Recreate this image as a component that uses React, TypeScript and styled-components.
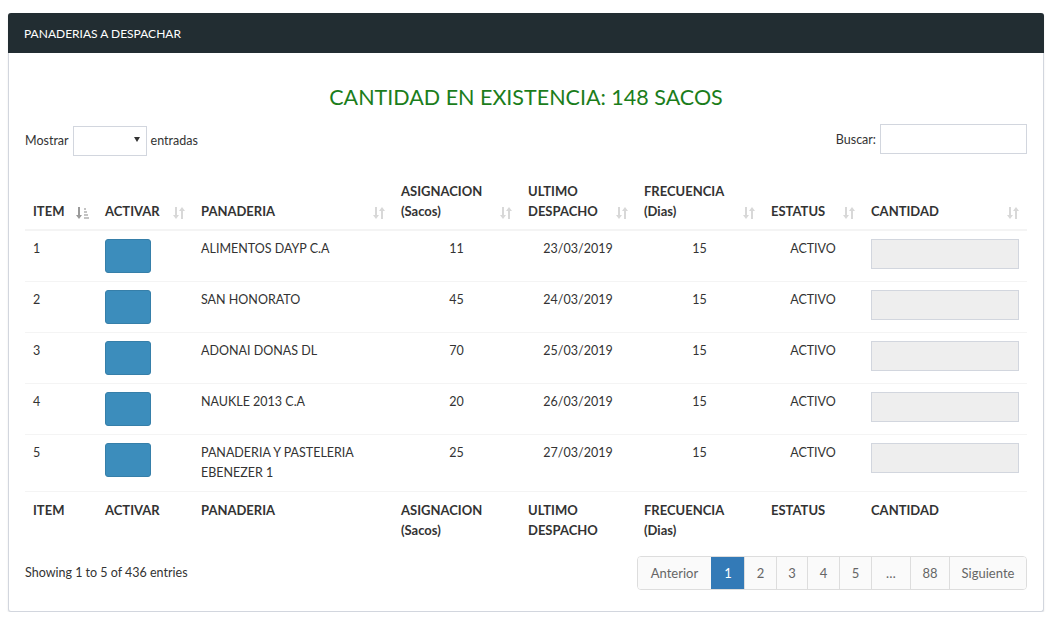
import React from 'react';
import styled, { createGlobalStyle } from 'styled-components';

const GlobalStyle = createGlobalStyle`
  body {
    margin: 0;
    background: #ffffff;
    font-family: Lato, "Open Sans", sans-serif;
    font-size: 13px;
    color: #333;
  }
`;

const Page = styled.div`
  padding: 13px 11px 0 8px;
`;

const Card = styled.div`
  border: 1px solid #d2d6de;
  border-top: none;
  border-radius: 3px;
  box-shadow: 0 1px 2px rgba(0, 0, 0, 0.1);
  background: #fff;
`;

const CardHeader = styled.div`
  background: #222d32;
  color: #fff;
  height: 40px;
  display: flex;
  align-items: center;
  padding: 0 16px;
  font-size: 12px;
  border-radius: 3px 3px 0 0;
  margin: 0 -1px;
`;

const CardBody = styled.div`
  padding: 30px 16px 21px;
`;

const Title = styled.h2`
  margin: 0 0 12px;
  text-align: center;
  color: #1b7d1b;
  font-weight: 400;
  font-size: 21.5px;
  line-height: 28px;
`;

const Controls = styled.div`
  display: flex;
  justify-content: space-between;
  align-items: flex-start;
  margin-bottom: 17px;
  padding-top: 1px;
`;

const Label = styled.label`
  display: flex;
  align-items: center;
  gap: 4px;
  font-size: 12.5px;
  color: #333;
`;

const LengthSelect = styled.div`
  position: relative;
  width: 74px;
  height: 30px;
  border: 1px solid #d2d6de;
  box-sizing: border-box;
  margin-top: 2px;
  &::after {
    content: '';
    position: absolute;
    right: 6px;
    top: 10px;
    border-left: 3px solid transparent;
    border-right: 3px solid transparent;
    border-top: 5px solid #333;
  }
`;

const SearchInput = styled.div`
  width: 147px;
  height: 30px;
  border: 1px solid #d2d6de;
  box-sizing: border-box;
`;

const Table = styled.table`
  width: 100%;
  border-collapse: collapse;
  table-layout: fixed;
  line-height: 20px;
`;

const Th = styled.th<{ $w: number }>`
  box-sizing: border-box;
  width: ${p => p.$w}px;
  text-align: left;
  vertical-align: bottom;
  font-weight: 700;
  font-size: 13px;
  color: #333;
  padding: 8px 8px 8px;
  position: relative;
  border-bottom: 2px solid #f4f4f4;
`;

const FootTh = styled.th`
  text-align: left;
  vertical-align: top;
  font-weight: 700;
  font-size: 13px;
  color: #333;
  padding: 8px 8px 8px;
  border-top: 1px solid #f4f4f4;
`;

const SortIcon = styled.span`
  position: absolute;
  right: 7px;
  bottom: 9px;
  display: flex;
`;

const Td = styled.td<{ $center?: boolean }>`
  padding: 8px;
  vertical-align: top;
  font-size: 12.5px;
  color: #333;
  text-align: ${p => (p.$center ? 'center' : 'left')};
  border-top: 1px solid #f4f4f4;
`;

const ActivateButton = styled.button`
  display: block;
  width: 46px;
  height: 34px;
  background: #3c8dbc;
  border: 1px solid #367fa9;
  border-radius: 3px;
  padding: 0;
`;

const QtyInput = styled.div`
  width: 148px;
  height: 30px;
  background: #eeeeee;
  border: 1px solid #d2d6de;
  box-sizing: border-box;
`;

const Footer = styled.div`
  display: flex;
  justify-content: space-between;
  align-items: center;
  margin-top: 8px;
`;

const Info = styled.div`
  font-size: 12.5px;
  color: #333;
  margin-top: -2px;
`;

const Pager = styled.div`
  display: flex;
  border: 1px solid #ddd;
  border-radius: 4px;
  overflow: hidden;
`;

const PageItem = styled.span<{ $w: number; $active?: boolean }>`
  width: ${p => p.$w}px;
  height: 32px;
  display: flex;
  align-items: center;
  justify-content: center;
  font-size: 13px;
  background: ${p => (p.$active ? '#337ab7' : '#fafafa')};
  color: ${p => (p.$active ? '#fff' : '#666')};
  border-left: 1px solid ${p => (p.$active ? '#337ab7' : '#ddd')};
  box-sizing: border-box;
  &:first-child {
    border-left: none;
  }
`;

const SortBoth = () => (
  <svg width="14" height="14" viewBox="0 0 14 14">
    <g fill="#d8d8d8">
      <rect x="3" y="1" width="2" height="9" />
      <polygon points="1,9 7,9 4,13" />
      <rect x="9" y="4" width="2" height="9" />
      <polygon points="7,5 13,5 10,1" />
    </g>
  </svg>
);

const SortAsc = () => (
  <svg width="14" height="14" viewBox="0 0 14 14">
    <g fill="#9a9a9a">
      <rect x="2" y="1" width="2" height="9" />
      <polygon points="0,9 6,9 3,13" />
    </g>
    <g fill="#c4c4c4">
      <rect x="8" y="2" width="2" height="2" />
      <rect x="8" y="5" width="3" height="2" />
      <rect x="8" y="8" width="4" height="2" />
      <rect x="8" y="11" width="5" height="2" />
    </g>
  </svg>
);

const columns: { w: number; label: React.ReactNode; asc?: boolean }[] = [
  { w: 72, label: 'ITEM', asc: true },
  { w: 96, label: 'ACTIVAR' },
  { w: 200, label: 'PANADERIA' },
  { w: 127, label: <>ASIGNACION<br />(Sacos)</> },
  { w: 116, label: <>ULTIMO<br />DESPACHO</> },
  { w: 127, label: <>FRECUENCIA<br />(Dias)</> },
  { w: 100, label: 'ESTATUS' },
  { w: 164, label: 'CANTIDAD' },
];

const rows = [
  { item: 1, name: 'ALIMENTOS DAYP C.A', sacos: 11, date: '23/03/2019' },
  { item: 2, name: 'SAN HONORATO', sacos: 45, date: '24/03/2019' },
  { item: 3, name: 'ADONAI DONAS DL', sacos: 70, date: '25/03/2019' },
  { item: 4, name: 'NAUKLE 2013 C.A', sacos: 20, date: '26/03/2019' },
  { item: 5, name: <>PANADERIA Y PASTELERIA<br />EBENEZER 1</>, sacos: 25, date: '27/03/2019' },
];

const pages = [
  { label: 'Anterior', w: 73 },
  { label: '1', w: 33, active: true },
  { label: '2', w: 32 },
  { label: '3', w: 31 },
  { label: '4', w: 32 },
  { label: '5', w: 32 },
  { label: '…', w: 39 },
  { label: '88', w: 39 },
  { label: 'Siguiente', w: 77 },
];

export default function App() {
  return (
    <Page>
      <GlobalStyle />
      <Card>
        <CardHeader>PANADERIAS A DESPACHAR</CardHeader>
        <CardBody>
          <Title>CANTIDAD EN EXISTENCIA: 148 SACOS</Title>
          <Controls>
            <Label>
              Mostrar <LengthSelect /> entradas
            </Label>
            <Label>
              Buscar: <SearchInput />
            </Label>
          </Controls>
          <Table>
            <thead>
              <tr>
                {columns.map((c, i) => (
                  <Th key={i} $w={c.w}>
                    {c.label}
                    <SortIcon>{c.asc ? <SortAsc /> : <SortBoth />}</SortIcon>
                  </Th>
                ))}
              </tr>
            </thead>
            <tbody>
              {rows.map(r => (
                <tr key={r.item}>
                  <Td>{r.item}</Td>
                  <Td><ActivateButton /></Td>
                  <Td>{r.name}</Td>
                  <Td $center>{r.sacos}</Td>
                  <Td $center>{r.date}</Td>
                  <Td $center>15</Td>
                  <Td $center>ACTIVO</Td>
                  <Td><QtyInput /></Td>
                </tr>
              ))}
            </tbody>
            <tfoot>
              <tr>
                {columns.map((c, i) => (
                  <FootTh key={i}>{c.label}</FootTh>
                ))}
              </tr>
            </tfoot>
          </Table>
          <Footer>
            <Info>Showing 1 to 5 of 436 entries</Info>
            <Pager>
              {pages.map(p => (
                <PageItem key={p.label} $w={p.w} $active={p.active}>
                  {p.label}
                </PageItem>
              ))}
            </Pager>
          </Footer>
        </CardBody>
      </Card>
    </Page>
  );
}
